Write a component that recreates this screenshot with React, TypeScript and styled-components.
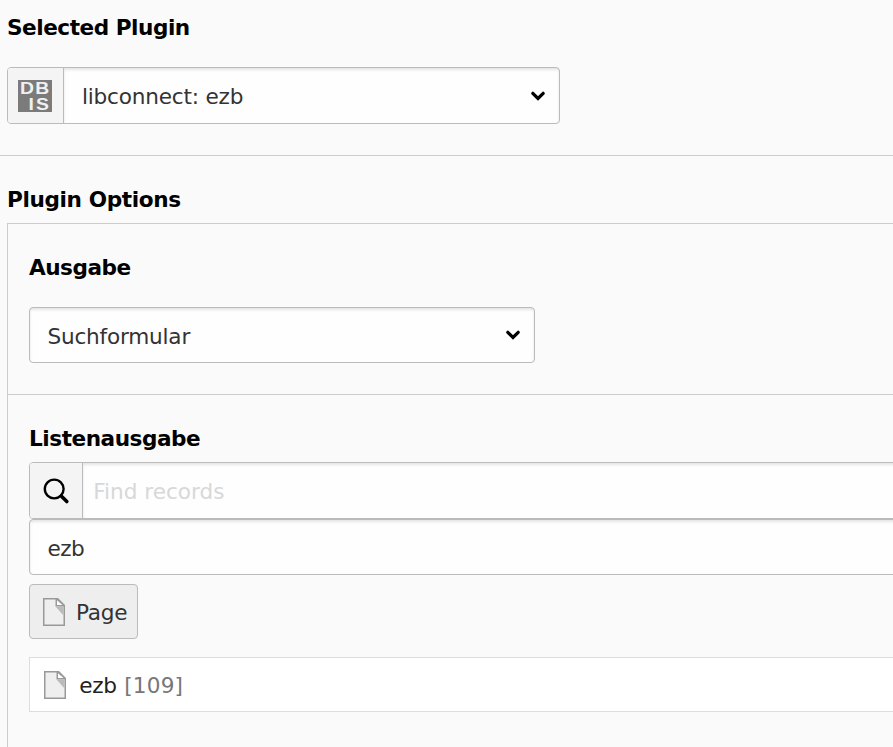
import React from "react";
import styled, { createGlobalStyle } from "styled-components";

const GlobalStyle = createGlobalStyle`
  *, *::before, *::after { box-sizing: border-box; }
  html, body { margin: 0; background: #fafafa; overflow: hidden; }
  body {
    font-family: Verdana, "DejaVu Sans", sans-serif;
    font-size: 21.6px;
    line-height: 26px;
    color: #333;
  }
`;

const Page = styled.main`
  height: 747px;
  overflow: hidden;
  display: flex;
  flex-direction: column;
`;

const PluginSection = styled.section`
  height: 156px;
  padding: 15px 0 0 7px;
  border-bottom: 1px solid #ccc;
`;

const Label = styled.h2<{ $gap: number; $track: number }>`
  margin: 0 0 ${(p) => p.$gap}px;
  height: 26px;
  font-size: 21.6px;
  line-height: 26px;
  font-weight: 700;
  color: #000;
  white-space: nowrap;
  letter-spacing: ${(p) => p.$track}px;
`;

const Field = styled.div<{ $width?: number; $height: number }>`
  display: flex;
  width: ${(p) => (p.$width ? `${p.$width}px` : "auto")};
  height: ${(p) => p.$height}px;
  margin-right: ${(p) => (p.$width ? 0 : -12)}px;
  border: 1px solid #bbb;
  border-radius: 4px;
  background: #fefefe;
  overflow: hidden;
`;

const Addon = styled.span<{ $width: number }>`
  flex: none;
  display: flex;
  align-items: center;
  justify-content: center;
  width: ${(p) => p.$width}px;
  border-right: 1px solid #bbb;
  background: #f4f4f4;
`;

const Value = styled.div<{ $inset: number; $muted?: boolean; $top?: number }>`
  flex: 1;
  display: flex;
  align-items: center;
  justify-content: space-between;
  padding: ${(p) => p.$top ?? 2}px 13px 0 ${(p) => p.$inset}px;
  color: ${(p) => (p.$muted ? "#d8d8d8" : "#333")};
  box-shadow: inset 0 2px 3px rgba(0, 0, 0, 0.1);
`;

const Text = styled.span<{ $track?: number }>`
  white-space: nowrap;
  letter-spacing: ${(p) => p.$track ?? 0}px;
`;

const OptionsSection = styled.section`
  flex: 1;
  display: flex;
  flex-direction: column;
  padding: 31px 0 0 7px;
`;

const Panel = styled.div`
  flex: 1;
  border: 1px solid #ccc;
  border-width: 1px 0 0 1px;
`;

const OutputGroup = styled.div`
  height: 171px;
  padding: 31px 0 0 21px;
  border-bottom: 1px solid #ccc;
`;

const ListGroup = styled.div`
  padding: 31px 0 0 21px;
`;

const PageButton = styled.button`
  display: flex;
  align-items: center;
  width: 109px;
  height: 55px;
  margin: 9px 0 18px;
  padding: 0 0 0 13px;
  gap: 11px;
  border: 1px solid #bbb;
  border-radius: 4px;
  background: #eee;
  color: #333;
  font: inherit;
`;

const ButtonText = styled(Text)`
  padding-top: 2px;
`;

const RecordRow = styled.div`
  display: flex;
  align-items: center;
  height: 55px;
  padding-left: 14px;
  border: 1px solid #ddd;
  border-right: 0;
  background: #fff;
  color: #212121;
`;

const RecordText = styled(Text)`
  padding: 2px 0 0 13.3px;
`;

const RecordId = styled.span`
  margin-left: 1px;
  color: #777;
  letter-spacing: 0.15px;
`;

const Svg = styled.svg`
  display: block;
  flex: none;
`;

const DbisSvg = styled(Svg)`
  margin-right: 2px;
`;

const ChevronSvg = styled(Svg)<{ $raise: number }>`
  margin-bottom: ${(p) => p.$raise}px;
`;

const DbisIcon = () => (
  <DbisSvg width="34" height="32" viewBox="0 0 34 32">
    <rect width="34" height="32" fill="#7b7b7b" />
    <g
      fill="#f0f0f0"
      fontFamily="Liberation Sans"
      fontWeight="700"
      fontSize="17"
    >
      <text transform="translate(2 14.2) scale(1.14 1)" letterSpacing="1">DB</text>
      <text transform="translate(10.4 30.2) scale(1.14 1)" letterSpacing="2">IS</text>
    </g>
  </DbisSvg>
);

const Chevron = ({ raise = 0 }: { raise?: number }) => (
  <ChevronSvg $raise={raise} width="16" height="12" viewBox="0 0 16 12">
    <path d="M2.8 2.3 8 7.5 13.2 2.3" fill="none" stroke="#000" strokeWidth="3.2" strokeLinecap="round" />
  </ChevronSvg>
);

const SearchIcon = () => (
  <Svg width="28" height="28" viewBox="0 0 28 28">
    <circle cx="12.2" cy="12" r="9.4" fill="none" stroke="#000" strokeWidth="2.4" />
    <path d="M19.2 19 24.8 24.6" stroke="#000" strokeWidth="3.6" strokeLinecap="round" />
  </Svg>
);

const PageIcon = () => (
  <Svg width="22" height="28" viewBox="0 0 22 28">
    <path d="M0 0H15L22 7V28H0Z" fill="#999" />
    <path d="M1.5 1.5H12.5V8.5H20.5V26.5H1.5Z" fill="#efefef" />
    <path d="M14 2.2V7H19.5Z" fill="#fff" />
    <path d="M12.5 8.5H20.5V17.5Z" fill="#bbb" />
  </Svg>
);

export default function App() {
  return (
    <>
      <GlobalStyle />
      <Page>
        <PluginSection>
          <Label $gap={26} $track={-0.47}>Selected Plugin</Label>
          <Field $width={553} $height={57}>
            <Addon $width={56}><DbisIcon /></Addon>
            <Value $inset={18}>
              <Text $track={-0.2}>libconnect: ezb</Text>
              <Chevron />
            </Value>
          </Field>
        </PluginSection>
        <OptionsSection>
          <Label $gap={10} $track={-0.37}>Plugin Options</Label>
          <Panel>
            <OutputGroup>
              <Label $gap={26} $track={-0.48}>Ausgabe</Label>
              <Field $width={506} $height={56}>
                <Value $inset={17.4} $top={3}>
                  <Text $track={-0.2}>Suchformular</Text>
                  <Chevron raise={2} />
                </Value>
              </Field>
            </OutputGroup>
            <ListGroup>
              <Label $gap={10} $track={-0.46}>Listenausgabe</Label>
              <Field $height={57}>
                <Addon $width={53}><SearchIcon /></Addon>
                <Value $inset={10.2} $muted><Text>Find records</Text></Value>
              </Field>
              <Field $height={56}>
                <Value $inset={17.4} $top={3}><Text $track={-0.5}>ezb</Text></Value>
              </Field>
              <PageButton type="button">
                <PageIcon />
                <ButtonText $track={-0.25}>Page</ButtonText>
              </PageButton>
              <RecordRow>
                <PageIcon />
                <RecordText $track={-0.3}>ezb <RecordId>[109]</RecordId></RecordText>
              </RecordRow>
            </ListGroup>
          </Panel>
        </OptionsSection>
      </Page>
    </>
  );
}
